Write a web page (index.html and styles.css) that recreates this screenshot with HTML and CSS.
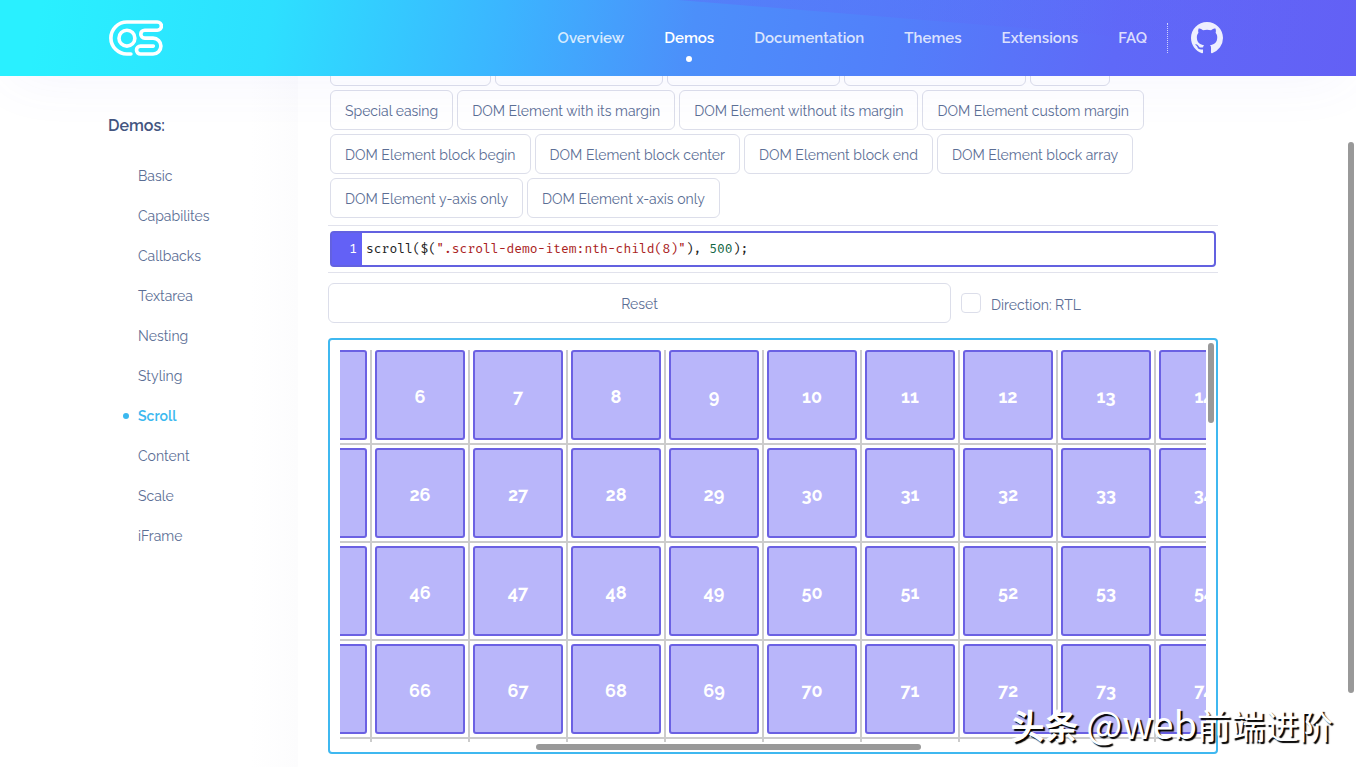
FILE: index.html
```html
<!DOCTYPE html>
<html lang="en">
<head>
    <meta charset="UTF-8">
    <meta name="viewport" content="width=device-width, initial-scale=1.0">
    <title>OverlayScrollbars - Demos</title>
    <link rel="stylesheet" href="styles.css">
</head>
<body>
    <header class="header">
        <div class="header-shape"></div>
        <div class="header-inner">
            <a class="logo" href="#" aria-label="OverlayScrollbars">
                <svg width="54" height="36" viewBox="327 59 163 109" fill="none" stroke="#fff" stroke-width="11" stroke-linecap="round">
                    <path d="M393 162H381A48.500 48.500 0 0 1 381 65H473a12.500 12.500 0 0 1 0 25H435a12 12 0 0 0 0 24H460a24 24 0 0 1 0 48H422a12 12 0 0 1 0-24H461"/>
                    <circle cx="381" cy="114" r="24"/>
                </svg>
            </a>
            <nav class="main-nav">
                <a href="#">Overview</a>
                <a href="#" class="active">Demos</a>
                <a href="#">Documentation</a>
                <a href="#">Themes</a>
                <a href="#">Extensions</a>
                <a href="#">FAQ</a>
            </nav>
            <a class="github" href="#" aria-label="GitHub">
                <svg width="32" height="32" viewBox="0 0 16 16" fill="currentColor">
                    <path d="M8 0C3.580 0 0 3.580 0 8c0 3.540 2.290 6.530 5.470 7.590.4.070.55-.17.55-.38 0-.19-.01-.82-.01-1.490-2.010.37-2.530-.49-2.690-.94-.09-.23-.48-.94-.82-1.130-.28-.15-.68-.52-.01-.53.63-.01 1.080.58 1.230.82.72 1.210 1.870.87 2.330.66.070-.52.28-.87.51-1.070-1.780-.2-3.640-.89-3.640-3.950 0-.87.31-1.590.82-2.150-.08-.2-.36-1.020.08-2.120 0 0 .67-.21 2.200.82.64-.18 1.320-.27 2-.27s1.360.09 2 .27c1.530-1.040 2.200-.82 2.200-.82.44 1.100.16 1.920.08 2.120.51.56.82 1.270.82 2.150 0 3.070-1.870 3.750-3.650 3.950.29.25.54.73.54 1.480 0 1.070-.01 1.930-.01 2.200 0 .21.15.46.55.38A8.010 8.010 0 0 0 16 8c0-4.420-3.580-8-8-8z"/>
                </svg>
            </a>
        </div>
    </header>

    <div class="page">
        <aside class="sidebar">
            <h2>Demos:</h2>
            <ul>
                <li><a href="#">Basic</a></li>
                <li><a href="#">Capabilites</a></li>
                <li><a href="#">Callbacks</a></li>
                <li><a href="#">Textarea</a></li>
                <li><a href="#">Nesting</a></li>
                <li><a href="#">Styling</a></li>
                <li><a href="#" class="active">Scroll</a></li>
                <li><a href="#">Content</a></li>
                <li><a href="#">Scale</a></li>
                <li><a href="#">iFrame</a></li>
            </ul>
        </aside>

        <main class="content">
            <div class="button-rows">
                <!-- this row is scrolled under the header -->
                <div class="button-row first">
                    <button type="button" class="btn" aria-label="Coordinates"></button>
                    <button type="button" class="btn" aria-label="Percent"></button>
                    <button type="button" class="btn" aria-label="Relative"></button>
                    <button type="button" class="btn" aria-label="Duration"></button>
                    <button type="button" class="btn" aria-label="Easing"></button>
                </div>
                <div class="button-row">
                    <button type="button" class="btn">Special easing</button>
                    <button type="button" class="btn">DOM Element with its margin</button>
                    <button type="button" class="btn">DOM Element without its margin</button>
                    <button type="button" class="btn">DOM Element custom margin</button>
                </div>
                <div class="button-row">
                    <button type="button" class="btn">DOM Element block begin</button>
                    <button type="button" class="btn">DOM Element block center</button>
                    <button type="button" class="btn">DOM Element block end</button>
                    <button type="button" class="btn">DOM Element block array</button>
                </div>
                <div class="button-row">
                    <button type="button" class="btn">DOM Element y-axis only</button>
                    <button type="button" class="btn">DOM Element x-axis only</button>
                </div>
            </div>

            <div class="editor-wrap">
                <div class="editor">
                    <span class="line-number">1</span>
                    <code>scroll($(<span class="string">".scroll-demo-item:nth-child(8)"</span>), <span class="number">500</span>);</code>
                </div>
            </div>

            <div class="controls">
                <button type="button" class="btn reset">Reset</button>
                <div class="rtl">
                    <input type="checkbox" id="rtl">
                    <label for="rtl">Direction: RTL</label>
                </div>
            </div>

            <div class="demo">
                <div class="viewport">
                    <div class="grid">
                        <div class="cell"><div></div></div>
                        <div class="cell"><div>6</div></div>
                        <div class="cell"><div>7</div></div>
                        <div class="cell"><div>8</div></div>
                        <div class="cell"><div>9</div></div>
                        <div class="cell"><div>10</div></div>
                        <div class="cell"><div>11</div></div>
                        <div class="cell"><div>12</div></div>
                        <div class="cell"><div>13</div></div>
                        <div class="cell"><div>14</div></div>

                        <div class="cell"><div></div></div>
                        <div class="cell"><div>26</div></div>
                        <div class="cell"><div>27</div></div>
                        <div class="cell"><div>28</div></div>
                        <div class="cell"><div>29</div></div>
                        <div class="cell"><div>30</div></div>
                        <div class="cell"><div>31</div></div>
                        <div class="cell"><div>32</div></div>
                        <div class="cell"><div>33</div></div>
                        <div class="cell"><div>34</div></div>

                        <div class="cell"><div></div></div>
                        <div class="cell"><div>46</div></div>
                        <div class="cell"><div>47</div></div>
                        <div class="cell"><div>48</div></div>
                        <div class="cell"><div>49</div></div>
                        <div class="cell"><div>50</div></div>
                        <div class="cell"><div>51</div></div>
                        <div class="cell"><div>52</div></div>
                        <div class="cell"><div>53</div></div>
                        <div class="cell"><div>54</div></div>

                        <div class="cell"><div></div></div>
                        <div class="cell"><div>66</div></div>
                        <div class="cell"><div>67</div></div>
                        <div class="cell"><div>68</div></div>
                        <div class="cell"><div>69</div></div>
                        <div class="cell"><div>70</div></div>
                        <div class="cell"><div>71</div></div>
                        <div class="cell"><div>72</div></div>
                        <div class="cell"><div>73</div></div>
                        <div class="cell"><div>74</div></div>

                        <div class="cell"></div>
                        <div class="cell"></div>
                        <div class="cell"></div>
                        <div class="cell"></div>
                        <div class="cell"></div>
                        <div class="cell"></div>
                        <div class="cell"></div>
                        <div class="cell"></div>
                        <div class="cell"></div>
                        <div class="cell"></div>
                    </div>
                </div>
                <div class="scrollbar vertical"></div>
                <div class="scrollbar horizontal"></div>
            </div>
        </main>
    </div>

    <div class="scrollbar page-scrollbar"></div>
    <div class="watermark"><b>头条</b> <span>@web</span>前端进阶</div>
</body>
</html>
```
FILE: styles.css
```css
* {
    box-sizing: border-box;
}
body {
    margin: 0;
    height: 100vh;
    overflow: hidden;
    position: relative;
    font-family: Raleway, Lato, sans-serif;
    font-size: 14px;
    color: #5b6e95;
    background: #fff;
}
a {
    color: inherit;
    text-decoration: none;
}

/* header */
.header {
    position: relative;
    z-index: 2;
    height: 76px;
    background: linear-gradient(100deg, #29f0ff 3%, #2de0ff 20%, #3bb5ff 37%, #4c8ffa 51%, #527ffa 66%, #5f69f8 82%, #6360f5 100%);
    box-shadow: 0 10px 60px -10px rgba(99, 97, 246, 0.07);
}
.header-shape {
    position: absolute;
    inset: 0;
    background: linear-gradient(90deg, rgba(99, 97, 246, 0.35) 50%, rgba(99, 97, 246, 0.1) 80%);
    clip-path: polygon(50% 0, 100% 0, 100% 60px, 78% 31px);
}
.header-inner {
    position: relative;
    display: flex;
    align-items: center;
    max-width: 1140px;
    height: 100%;
    margin: 0 auto;
    padding-right: 25px;
}
.logo {
    padding-left: 1px;
    display: flex;
}
.main-nav {
    display: flex;
    gap: 40px;
    margin-left: auto;
    padding-right: 20px;
    font-size: 15px;
    font-weight: 600;
    line-height: 30px;
    color: rgba(255, 255, 255, 0.8);
    border-right: 1px dotted rgba(255, 255, 255, 0.7);
}
.main-nav a {
    position: relative;
}
.main-nav .active {
    color: #fff;
}
.main-nav .active::after {
    content: "";
    position: absolute;
    left: 50%;
    bottom: -9px;
    width: 6px;
    height: 6px;
    margin-left: -3px;
    border-radius: 50%;
    background: #fff;
}
.github {
    display: flex;
    margin-left: 23px;
    color: #eeeffe;
}

/* layout */
.page {
    display: flex;
    max-width: 1140px;
    margin: 0 auto;
}
.sidebar {
    flex: 0 0 190px;
    height: calc(100vh - 76px);
    background: linear-gradient(90deg, #fff 75%, #fcfcfd);
}
.sidebar h2 {
    margin: 0;
    padding-top: 40px;
    font-size: 16px;
    font-weight: 600;
    line-height: 20px;
    color: #43557f;
}
.sidebar ul {
    list-style: none;
    margin: 0;
    padding: 20px 0 0 30px;
    line-height: 40px;
}
.sidebar a {
    position: relative;
}
.sidebar .active {
    color: #3bb8ef;
    font-weight: 600;
}
.sidebar .active::before {
    content: "";
    position: absolute;
    left: -15px;
    top: 5px;
    width: 6px;
    height: 6px;
    border-radius: 50%;
    background: #3bb8ef;
}
.content {
    flex: 1;
    min-width: 0;
    padding: 0 30px;
}

/* buttons */
.button-rows {
    display: flex;
    flex-direction: column;
    gap: 4px;
    margin-top: -30px;
    padding: 0 2px 7px;
}
.button-row {
    display: flex;
    gap: 4px;
}
.button-row.first {
    display: grid;
    grid-template-columns: 161px 168px 173px 182px 80px;
}
.btn {
    height: 40px;
    padding: 2px 14px 0;
    font-family: inherit;
    font-size: 14px;
    color: #5b6e95;
    white-space: nowrap;
    background: #fff;
    border: 1px solid #dcdeea;
    border-radius: 6px;
    cursor: pointer;
}
.button-row.first .btn {
    background: transparent;
}

/* code */
.editor-wrap {
    padding: 5px 2px;
    border-top: 1px solid #e1e2ec;
    border-bottom: 1px solid #e1e2ec;
}
.editor {
    display: flex;
    height: 36px;
    border: 2px solid #6361e0;
    border-radius: 4px;
    font-family: "Fira Mono", "Fira Code", "DejaVu Sans Mono", monospace;
    font-size: 13px;
    line-height: 32px;
    color: #222;
    background: #fff;
}
.line-number {
    width: 30px;
    padding-right: 5px;
    text-align: right;
    color: #fff;
    background: #6361f6;
}
.editor code {
    padding-left: 4px;
    font-family: inherit;
    white-space: pre;
}
.string {
    color: #aa2222;
}
.number {
    color: #116644;
}

/* reset + rtl */
.controls {
    display: flex;
    align-items: center;
    gap: 10px;
    margin: 10px 0 15px;
}
.reset {
    width: 70%;
}
.rtl {
    display: flex;
    align-items: center;
    gap: 10px;
}
.rtl label {
    padding-top: 3px;
}
.rtl input {
    appearance: none;
    width: 20px;
    height: 20px;
    margin: 0;
    border: 1px solid #dcdeea;
    border-radius: 4px;
}

/* scroll demo */
.demo {
    position: relative;
    padding: 10px;
    border: 2px solid #3fb8f0;
    border-radius: 4px;
}
.viewport {
    height: 392px;
    overflow: hidden;
}
.grid {
    display: grid;
    grid-template-columns: repeat(10, 98px);
    grid-auto-rows: 98px;
    margin: -3px 0 0 -66px;
}
.cell {
    padding: 3px;
    border-right: 2px solid #ccc;
    border-bottom: 2px solid #ccc;
}
.cell div {
    height: 90px;
    border: 2px solid #6b61e3;
    border-radius: 3px;
    background: #b9b6fa;
    color: #fff;
    font-size: 18px;
    font-weight: bold;
    line-height: 90px;
    text-align: center;
}
.scrollbar {
    position: absolute;
    border-radius: 3px;
    background: #999;
}
.vertical {
    top: 3px;
    right: 2px;
    width: 6px;
    height: 80px;
}
.horizontal {
    left: 206px;
    bottom: 2px;
    width: 385px;
    height: 6px;
}
.page-scrollbar {
    top: 142px;
    right: 2px;
    width: 6px;
    height: 551px;
}

.watermark {
    position: absolute;
    right: 23px;
    bottom: 18px;
    font-family: "Noto Sans CJK SC", sans-serif;
    font-size: 34px;
    line-height: 48px;
    color: #fff;
    text-shadow: 2px 2px 1px #000;
    white-space: nowrap;
}
.watermark span {
    font-size: 38px;
}
```
